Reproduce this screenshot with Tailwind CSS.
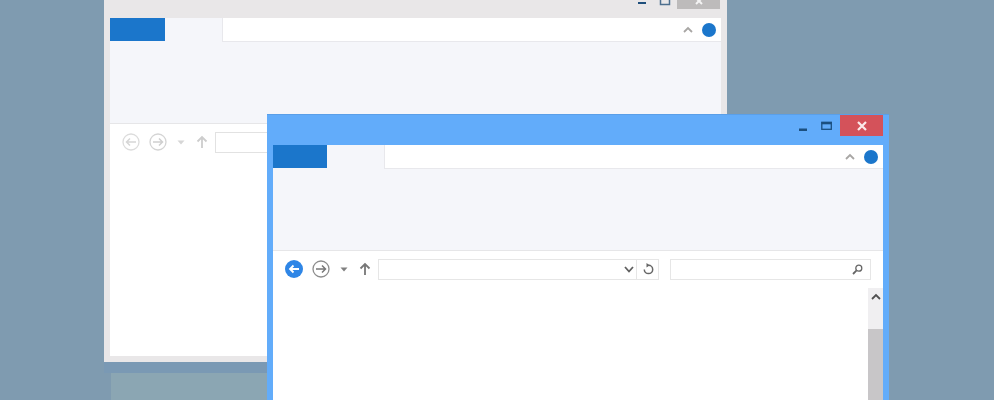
<!DOCTYPE html>
<html>
<head>
    <title>Windows</title>
    <script src="https://cdn.jsdelivr.net/npm/@tailwindcss/browser@4"></script>
</head>
<body class="bg-[#7f9bb0] overflow-hidden">
<div class="relative w-[994px] h-[400px] overflow-hidden bg-[#7f9bb0]">

    <!-- taskbar-ish patch under the back window -->
    <div class="absolute left-[104px] top-[362px] w-[170px] h-[11px] bg-[#7a99b4]"></div>
    <div class="absolute left-[111px] top-[373px] w-[163px] h-[27px] bg-[#8ba6b3]"></div>

    <!-- back window (inactive) -->
    <div class="absolute left-[104px] top-[-13px] w-[623px] h-[375px] bg-[#e9e7e8] flex flex-col px-[6px] pb-[6px]">
        <div class="h-[31px] shrink-0 flex justify-end items-start pr-[1px]">
            <div class="flex items-start mt-[13px]">
                <svg width="16" height="8" viewBox="0 0 16 8" class="mr-[8px]"><rect x="4" y="2" width="8" height="2" fill="#1f4f7c"/></svg>
                <svg width="14" height="8" viewBox="0 0 14 8" class="mr-[5px]"><path d="M2.500 0v4.500h9V0" fill="none" stroke="#4d6f8e" stroke-width="1.500"/></svg>
                <div class="w-[43px] h-[9px] bg-[#bdbbbb] flex justify-center overflow-hidden">
                    <svg width="12" height="9" viewBox="0 0 12 9"><path d="M2 -3L9 4M10 -3L3 4" fill="none" stroke="#f4f4f4" stroke-width="2"/></svg>
                </div>
            </div>
        </div>
        <div class="h-[106px] shrink-0 bg-[#f5f6fa] border-b border-[#e6e6e8]">
            <div class="flex items-start h-[24px]">
                <div class="w-[55px] h-[23px] bg-[#1b76cb]"></div>
                <div class="w-[57px]"></div>
                <div class="flex-1 h-[24px] bg-white border-l border-b border-[#e8e8ec] flex items-center justify-end pr-[5px] gap-[9px]">
                    <svg width="10" height="7" viewBox="0 0 10 7"><path d="M1 6L5 2L9 6" fill="none" stroke="#a8a6a4" stroke-width="1.800"/></svg>
                    <div class="w-[14px] h-[14px] rounded-full bg-[#1b76cb]"></div>
                </div>
            </div>
        </div>
        <div class="flex-1 bg-white">
            <div class="flex items-center h-[36px] pl-[12px]">
                <svg width="18" height="18" viewBox="0 0 18 18"><circle cx="9" cy="9" r="8" fill="none" stroke="#dcdcdc" stroke-width="1.300"/><path d="M14 9H5M8 5.500L4.500 9L8 12.500" fill="none" stroke="#d6d6d6" stroke-width="1.500"/></svg>
                <svg width="18" height="18" viewBox="0 0 18 18" class="ml-[9px]"><circle cx="9" cy="9" r="8" fill="none" stroke="#d4d4d4" stroke-width="1.300"/><path d="M4 9H13M10 5.500L13.500 9L10 12.500" fill="none" stroke="#cfcfcf" stroke-width="1.500"/></svg>
                <svg width="8" height="5" viewBox="0 0 8 5" class="ml-[10px]"><path d="M0.500 0.500h7L4 4.500z" fill="#d6d6d6"/></svg>
                <svg width="12" height="14" viewBox="0 0 12 14" class="ml-[11px]"><path d="M6 13V2M1.500 6.500L6 2L10.500 6.500" fill="none" stroke="#cdcdcd" stroke-width="1.800"/></svg>
                <div class="ml-[7px] w-[200px] h-[21px] border border-[#e2e2e2] bg-white"></div>
            </div>
        </div>
    </div>

    <!-- front window (active) -->
    <div class="absolute left-[267px] top-[114px] w-[622px] h-[300px] bg-[#62acfa] border-t border-[#5a9fe8] flex flex-col px-[6px]">
        <div class="h-[30px] shrink-0 flex justify-end items-start">
            <svg width="16" height="16" viewBox="0 0 16 16" class="mt-[5px] mr-[9px]"><rect x="4" y="8.500" width="8" height="2.500" fill="#1b4f7f"/></svg>
            <svg width="14" height="14" viewBox="0 0 14 14" class="mt-[5px] mr-[6px]"><rect x="1.800" y="2.300" width="9.500" height="7" fill="none" stroke="#1b4f7f" stroke-width="1.300"/><rect x="1.500" y="2" width="10" height="2.300" fill="#1b4f7f"/></svg>
            <div class="w-[43px] h-[21px] bg-[#d4525a] flex items-center justify-center">
                <svg width="12" height="12" viewBox="0 0 12 12"><path d="M2 2L10 10M10 2L2 10" fill="none" stroke="#fbeaea" stroke-width="2.200"/></svg>
            </div>
        </div>
        <div class="h-[106px] shrink-0 bg-[#f5f6fa] border-b border-[#e6e6e8]">
            <div class="flex items-start h-[24px]">
                <div class="w-[54px] h-[23px] bg-[#1b76cb]"></div>
                <div class="w-[57px]"></div>
                <div class="flex-1 h-[24px] bg-white border-l border-b border-[#e8e8ec] flex items-center justify-end pr-[5px] gap-[9px]">
                    <svg width="10" height="7" viewBox="0 0 10 7"><path d="M1 6L5 2L9 6" fill="none" stroke="#a8a6a4" stroke-width="1.800"/></svg>
                    <div class="w-[14px] h-[14px] rounded-full bg-[#1b76cb]"></div>
                </div>
            </div>
        </div>
        <div class="flex-1 bg-white">
            <div class="flex items-center h-[36px] pl-[12px]">
                <svg width="18" height="18" viewBox="0 0 18 18"><circle cx="9" cy="9" r="9" fill="#2f86e6"/><path d="M14 9H5.500M8.500 5.500L5 9L8.500 12.500" fill="none" stroke="#fff" stroke-width="1.800"/></svg>
                <svg width="18" height="18" viewBox="0 0 18 18" class="ml-[9px]"><circle cx="9" cy="9" r="8" fill="none" stroke="#8d8d8d" stroke-width="1.300"/><path d="M4 9H13M10 5.500L13.500 9L10 12.500" fill="none" stroke="#777" stroke-width="1.500"/></svg>
                <svg width="8" height="5" viewBox="0 0 8 5" class="ml-[10px]"><path d="M0.500 0.500h7L4 4.500z" fill="#808080"/></svg>
                <svg width="12" height="14" viewBox="0 0 12 14" class="ml-[11px]"><path d="M6 13V2M1.500 6.500L6 2L10.500 6.500" fill="none" stroke="#777" stroke-width="1.800"/></svg>
                <div class="ml-[7px] w-[259px] h-[21px] border border-[#e6e6e6] bg-white flex items-center justify-end pr-[2px]">
                    <svg width="10" height="7" viewBox="0 0 10 7"><path d="M1 1L5 5.500L9 1" fill="none" stroke="#606060" stroke-width="1.800"/></svg>
                </div>
                <div class="w-[22px] h-[21px] border border-l-0 border-[#e6e6e6] bg-white flex items-center justify-center">
                    <svg width="12" height="12" viewBox="0 0 12 12"><path d="M6.500 2.200A4.200 4.200 0 1 1 2.300 6.400" fill="none" stroke="#666" stroke-width="1.500"/><path d="M4.500 0L7.800 2.200L4.500 4.500z" fill="#666"/></svg>
                </div>
                <div class="ml-[11px] w-[201px] h-[21px] border border-[#e6e6e6] bg-white flex items-center justify-end pr-[7px]">
                    <svg width="11" height="11" viewBox="0 0 11 11"><circle cx="6.800" cy="4.200" r="3" fill="none" stroke="#666" stroke-width="1.300"/><path d="M4.600 6.400L1 10" stroke="#666" stroke-width="1.800"/></svg>
                </div>
            </div>
            <div class="flex justify-end">
                <div class="w-[15px] h-[200px] bg-[#f0eff1] mt-[1px] flex flex-col items-center">
                    <svg width="10" height="7" viewBox="0 0 10 7" class="mt-[5px]"><path d="M1 6L5 2L9 6" fill="none" stroke="#505050" stroke-width="1.800"/></svg>
                    <div class="mt-[29px] w-full flex-1 bg-[#c8c6c8]"></div>
                </div>
            </div>
        </div>
    </div>
</div>
</body>
</html>
